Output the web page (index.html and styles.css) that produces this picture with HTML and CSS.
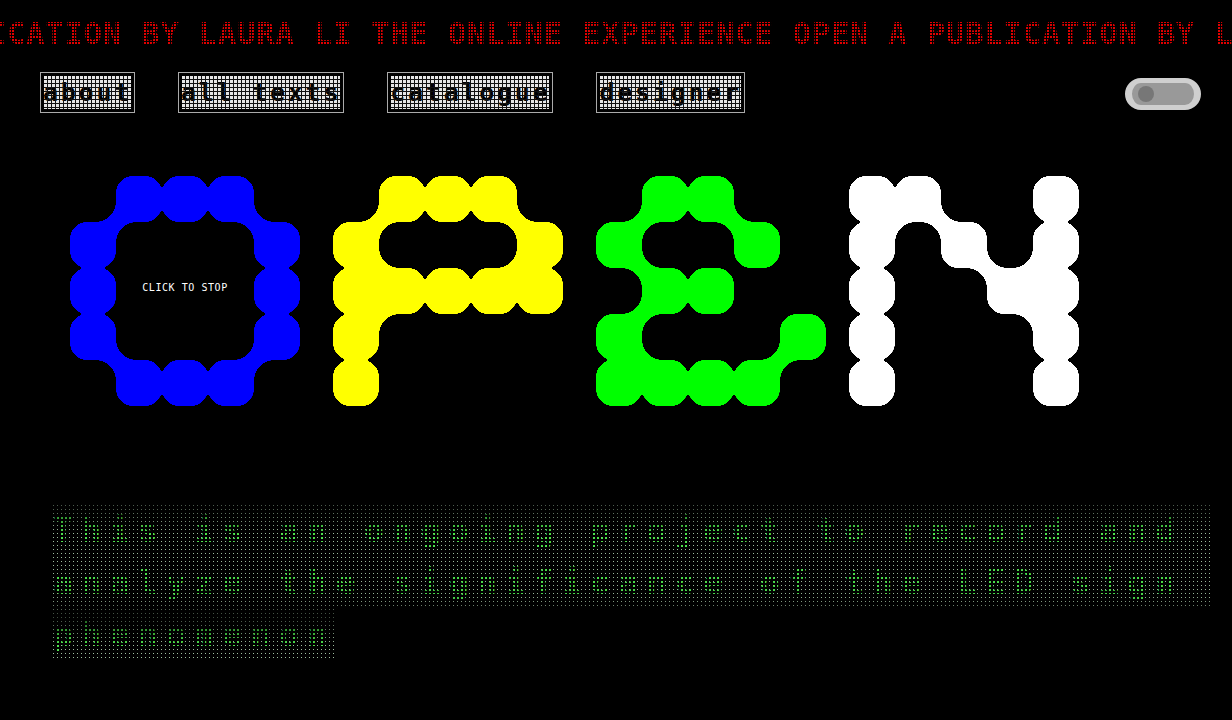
FILE: index.html
```html
<!DOCTYPE html>
<html lang="en">
<head>
    <meta charset="UTF-8">
    <meta name="viewport" content="width=device-width, initial-scale=1.0">
    <title>Open</title>
    <link rel="stylesheet" href="styles.css">
</head>
<body>
    <!-- rounds off the dots so they melt together a little -->
    <svg class="defs" width="0" height="0" aria-hidden="true">
        <filter id="melt" color-interpolation-filters="sRGB">
            <feGaussianBlur stdDeviation="1.5"/>
            <feColorMatrix values="1 0 0 0 0  0 1 0 0 0  0 0 1 0 0  0 0 0 20 -9.5"/>
        </filter>
    </svg>

    <div class="ticker">
        <div class="ticker-text">OPEN A PUBLICATION BY LAURA LI THE ONLINE EXPERIENCE OPEN A PUBLICATION BY LAURA LI THE ONLINE EXPERIENCE</div>
    </div>

    <header class="topbar">
        <nav class="nav">
            <a class="nav-link" href="#"><span class="nav-text">about</span></a>
            <a class="nav-link" href="#"><span class="nav-text">all texts</span></a>
            <a class="nav-link" href="#"><span class="nav-text">catalogue</span></a>
            <a class="nav-link" href="#"><span class="nav-text">designer</span></a>
        </nav>
        <div class="toggle"><div class="knob"></div></div>
    </header>

    <main>
        <div class="sign">
            <!-- O -->
            <div class="letter blue" role="img" aria-label="O">
                <div class="dots">
                    <i></i><i class="on dl"></i><i class="on"></i><i class="on dr"></i><i></i>
                    <i class="on"></i><i></i><i></i><i></i><i class="on"></i>
                    <i class="on"></i><i></i><i></i><i></i><i class="on"></i>
                    <i class="on dr"></i><i></i><i></i><i></i><i class="on dl"></i>
                    <i></i><i class="on"></i><i class="on"></i><i class="on"></i><i></i>
                </div>
                <div class="stop-label">CLICK TO STOP</div>
            </div>
            <!-- P -->
            <div class="letter yellow" role="img" aria-label="P">
                <div class="dots">
                    <i></i><i class="on dl"></i><i class="on"></i><i class="on dr"></i><i></i>
                    <i class="on dr"></i><i></i><i></i><i></i><i class="on dl"></i>
                    <i class="on sq-tr sq-br"></i><i class="on dl"></i><i class="on"></i><i class="on"></i><i class="on sq-tl"></i>
                    <i class="on"></i><i></i><i></i><i></i><i></i>
                    <i class="on"></i><i></i><i></i><i></i><i></i>
                </div>
            </div>
            <!-- E -->
            <div class="letter green" role="img" aria-label="E">
                <div class="dots">
                    <i></i><i class="on dl"></i><i class="on dr"></i><i></i><i></i>
                    <i class="on dr"></i><i></i><i></i><i class="on"></i><i></i>
                    <i></i><i class="on dl"></i><i class="on"></i><i></i><i></i>
                    <i class="on dr"></i><i></i><i></i><i></i><i class="on dl"></i>
                    <i class="on sq-tr"></i><i class="on"></i><i class="on"></i><i class="on"></i><i></i>
                </div>
            </div>
            <!-- N -->
            <div class="letter white letter-n" role="img" aria-label="N">
                <div class="dots">
                    <i class="on sq-br"></i><i class="on dl dr"></i><i></i><i></i><i class="on"></i>
                    <i class="on"></i><i></i><i class="on dr"></i><i></i><i class="on dl"></i>
                    <i class="on"></i><i></i><i></i><i class="on dr"></i><i class="on sq-tl sq-bl"></i>
                    <i class="on"></i><i></i><i></i><i></i><i class="on"></i>
                    <i class="on"></i><i></i><i></i><i></i><i class="on"></i>
                </div>
            </div>
        </div>

        <p class="intro"><span class="intro-text">This is an ongoing project to record and analyze the significance of the LED sign phenomenon</span></p>
    </main>
</body>
</html>
```

FILE: styles.css
```css
* {
    margin: 0;
    padding: 0;
    box-sizing: border-box;
}

body {
    width: 1232px;
    height: 720px;
    overflow: hidden;
    background: #000;
    font-family: 'DejaVu Sans Mono', monospace;
}

.defs {
    display: block;
    height: 0;
}

/* red led ticker */
.ticker {
    position: relative;
    height: 72px;
    padding-top: 18px;
    overflow: hidden;
}

.ticker-text {
    margin-left: -223px;
    font-size: 30px;
    font-weight: bold;
    line-height: 32px;
    letter-spacing: 1.1px;
    white-space: nowrap;
    color: #e00000;
}

.ticker::after {
    content: "";
    position: absolute;
    inset: 0;
    background:
        linear-gradient(to right, transparent 2px, #000 2px) 0 0 / 3px 3px,
        linear-gradient(to bottom, transparent 2px, #000 2px) 0 0 / 3px 3px;
}

/* nav */
.topbar {
    display: flex;
    justify-content: space-between;
    align-items: flex-start;
    padding: 0 31px 0 40px;
}

.nav {
    display: flex;
    gap: 43px;
}

.nav-link {
    display: block;
    height: 41px;
    padding: 2px;
    border: 1px solid #aaa;
    background: #000;
    color: #000;
    text-decoration: none;
}

.nav-text {
    position: relative;
    display: block;
    height: 35px;
    font-size: 25px;
    font-weight: bold;
    line-height: 36px;
    letter-spacing: 2.75px;
    white-space: pre;
    background: #e6e6e6;
    overflow: hidden;
}

.nav-text::after {
    content: "";
    position: absolute;
    inset: 0;
    border: 1px solid #000;
    background:
        linear-gradient(to right, transparent 3px, #111 3px) 0 0 / 4px 4px,
        linear-gradient(to bottom, transparent 3px, #111 3px) 0 0 / 4px 4px;
}

.toggle {
    width: 76px;
    height: 32px;
    margin-top: 6px;
    display: flex;
    align-items: center;
    padding-left: 6px;
    border: solid #cfcfcf;
    border-width: 5px 7px;
    border-radius: 16px;
    background: #999;
}

.knob {
    width: 16px;
    height: 16px;
    border-radius: 50%;
    background: #777;
}

/* big sign */
.sign {
    display: flex;
    gap: 33px;
    margin: 63px 0 0 70px;
}

.letter {
    display: grid;
}

.letter-n {
    margin-left: -10px;
}

.blue { color: #0000ff; }
.yellow { color: #ffff00; }
.green { color: #00ff00; }
.white { color: #fff; }

.dots {
    grid-area: 1 / 1;
    display: grid;
    grid-template-columns: repeat(5, 46px);
    grid-template-rows: repeat(5, 46px);
    filter: url(#melt);
}

.on {
    position: relative;
    background: currentColor;
    border-radius: 17px;
}

/* corners that face a join must stay full */
.on.sq-tl { border-top-left-radius: 0; }
.on.sq-tr { border-top-right-radius: 0; }
.on.sq-bl { border-bottom-left-radius: 0; }
.on.sq-br { border-bottom-right-radius: 0; }

/* joins two dots that only touch at a corner */
.dl::before,
.dr::after {
    content: "";
    position: absolute;
    top: calc(100% - 20px);
    width: 40px;
    height: 40px;
}

.dl::before {
    left: -20px;
    background:
        radial-gradient(circle at 0 0, transparent 19.6px, currentColor 20px) 0 0 / 20px 40px no-repeat,
        radial-gradient(circle at 100% 100%, transparent 19.6px, currentColor 20px) 100% 0 / 20px 40px no-repeat;
}

.dr::after {
    right: -20px;
    background:
        radial-gradient(circle at 0 100%, transparent 19.6px, currentColor 20px) 0 0 / 20px 40px no-repeat,
        radial-gradient(circle at 100% 0, transparent 19.6px, currentColor 20px) 100% 0 / 20px 40px no-repeat;
}

.stop-label {
    grid-area: 1 / 1;
    place-self: center;
    margin-bottom: 8px;
    font-size: 10px;
    letter-spacing: 0.55px;
    white-space: nowrap;
    color: #fff;
}

/* green led paragraph */
.intro {
    position: relative;
    width: 1170px;
    margin: 99px 0 0 53px;
    font-size: 33px;
    font-weight: bold;
    line-height: 52px;
    letter-spacing: 8.4px;
    white-space: pre-wrap;
    color: #50f050;
}

.intro-text {
    padding: 7px 0;
    background:
        linear-gradient(to bottom, transparent 1px, #000 1px) 1px 1px / 4px 4px fixed,
        linear-gradient(to right, #a8c8a8 1px, #000 1px) 1px 1px / 4px 4px fixed;
}

.intro::after {
    content: "";
    position: absolute;
    inset: -4px -20px -4px -4px;
    background:
        linear-gradient(to right, transparent 2px, #000 2px) 1px 1px / 4px 4px fixed,
        linear-gradient(to bottom, transparent 2px, #000 2px) 1px 1px / 4px 4px fixed,
        linear-gradient(to bottom, rgba(0,0,0,.55) 4%, rgba(0,0,0,.05) 20%, rgba(0,0,0,.1) 58%, rgba(0,0,0,.65) 70%, rgba(0,0,0,.05) 88%);
}
```
